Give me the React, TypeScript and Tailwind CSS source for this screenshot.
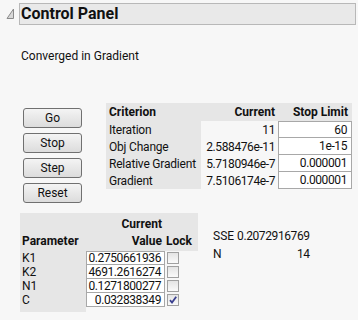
import React from "react";

const crit = [
  ["Iteration", "11", "60"],
  ["Obj Change", "2.588476e-11", "1e-15"],
  ["Relative Gradient", "5.7180946e-7", "0.000001"],
  ["Gradient", "7.5106174e-7", "0.000001"],
];

const params: [string, string, boolean][] = [
  ["K1", "0.2750661936", false],
  ["K2", "4691.2616274", false],
  ["N1", "0.1271800277", false],
  ["C", "0.032838349", true],
];

function Btn({ label }: { label: string }) {
  return (
    <div className="h-[20px] w-[59px] flex items-center justify-center rounded-[3px] border border-[#707070] bg-gradient-to-b from-[#f4f4f4] to-[#dcdcdc] text-[12px] leading-none">
      {label}
    </div>
  );
}

function Check({ checked }: { checked: boolean }) {
  return (
    <div className="w-[12px] h-[12px] border border-[#a0a0a0] bg-gradient-to-b from-[#e4e4e4] to-[#fafafa] flex items-center justify-center">
      {checked && (
        <svg width="10" height="10" viewBox="0 0 10 10">
          <path d="M2 5.2 L4 7.5 L8.2 1.8" fill="none" stroke="#3a3f8f" strokeWidth="1.8" />
        </svg>
      )}
    </div>
  );
}

export default function App() {
  return (
    <div
      className="w-[358px] h-[320px] overflow-hidden bg-[#f7f7f7] text-[#111] pt-[3px] whitespace-nowrap"
      style={{ fontFamily: 'Roboto, "Noto Sans", sans-serif' }}
    >
      {/* Header */}
      <div className="flex items-start">
        <div className="w-[19px] h-[22px] pl-[6px] pt-[5px]">
          <svg width="9" height="12" viewBox="0 0 9 12">
            <polygon points="7.5,1 7.5,10.5 1,10.5" fill="#d8d8d8" stroke="#8a8a8a" strokeWidth="1" />
          </svg>
        </div>
        <div className="flex-1 mr-[2px] h-[22px] border border-[#b8b8b8] bg-[#e9e9e9] flex items-center pl-[1px]">
          <span className="text-[16px] font-bold leading-none">Control Panel</span>
        </div>
      </div>

      <div className="mt-[23px] pl-[21px] text-[12px] leading-[16px]">Converged in Gradient</div>

      {/* Middle */}
      <div className="flex items-start mt-[39px] pl-[23px]">
        <div className="flex flex-col gap-[5px] mt-[5px]">
          <Btn label="Go" />
          <Btn label="Stop" />
          <Btn label="Step" />
          <Btn label="Reset" />
        </div>
        <div className="ml-[24px] text-[12px] leading-[16px]">
          <div className="flex h-[18px] bg-[#e6e6e6] font-bold items-center">
            <div className="w-[95px] pl-[3px]">Criterion</div>
            <div className="w-[77px] text-right pr-[3px]">Current</div>
            <div className="w-[74px] text-right pr-[4px]">Stop Limit</div>
          </div>
          {crit.map(([a, b, c], i) => (
            <div key={a} className="flex h-[17px]">
              <div className="w-[95px] pl-[3px] bg-[#e6e6e6] flex items-center tracking-[-0.2px]">{a}</div>
              <div className="w-[77px] pr-[3px] flex items-center justify-end tracking-[-0.4px]">{b}</div>
              <div
                className={`w-[74px] pr-[4px] bg-white border-x border-b border-[#a8a8a8] flex items-center justify-end tracking-[-0.4px] ${
                  i === 0 ? "border-t" : ""
                }`}
              >
                {c}
              </div>
            </div>
          ))}
        </div>
      </div>

      {/* Bottom */}
      <div className="flex items-start mt-[10px] pl-[20px] text-[12px]">
        <div>
          <div className="flex bg-[#e6e6e6] h-[38px] font-bold leading-[17px]">
            <div className="w-[66px] pl-[2px] flex items-end pb-[1px]">Parameter</div>
            <div className="w-[79px] text-right pr-[3px] flex flex-col justify-end pb-[1px]">
              <div>Current</div>
              <div>Value</div>
            </div>
            <div className="w-[33px] pl-[1px] flex items-end pb-[1px]">Lock</div>
          </div>
          {params.map(([a, b, c], i) => (
            <div key={a} className="flex h-[14px] leading-[12px]">
              <div className="w-[66px] pl-[2px] bg-[#e6e6e6] flex items-center">{a}</div>
              <div
                className={`w-[79px] pr-[3px] bg-white border-x border-b border-[#a8a8a8] flex items-center justify-end tracking-[-0.4px] ${
                  i === 0 ? "border-t" : ""
                }`}
              >
                {b}
              </div>
              <div className="w-[33px] pl-[2px] flex items-center">
                <Check checked={c} />
              </div>
            </div>
          ))}
          <div className="flex h-[5px]">
            <div className="w-[66px] bg-[#e6e6e6]" />
          </div>
        </div>
        <div className="ml-[15px] mt-[14px] leading-[18px] grid grid-cols-[auto_auto] gap-x-[3px] w-[90px]">
          <span>SSE</span>
          <span className="text-right tracking-[-0.4px]">0.2072916769</span>
          <span>N</span>
          <span className="text-right tracking-[-0.4px]">14</span>
        </div>
      </div>
    </div>
  );
}
